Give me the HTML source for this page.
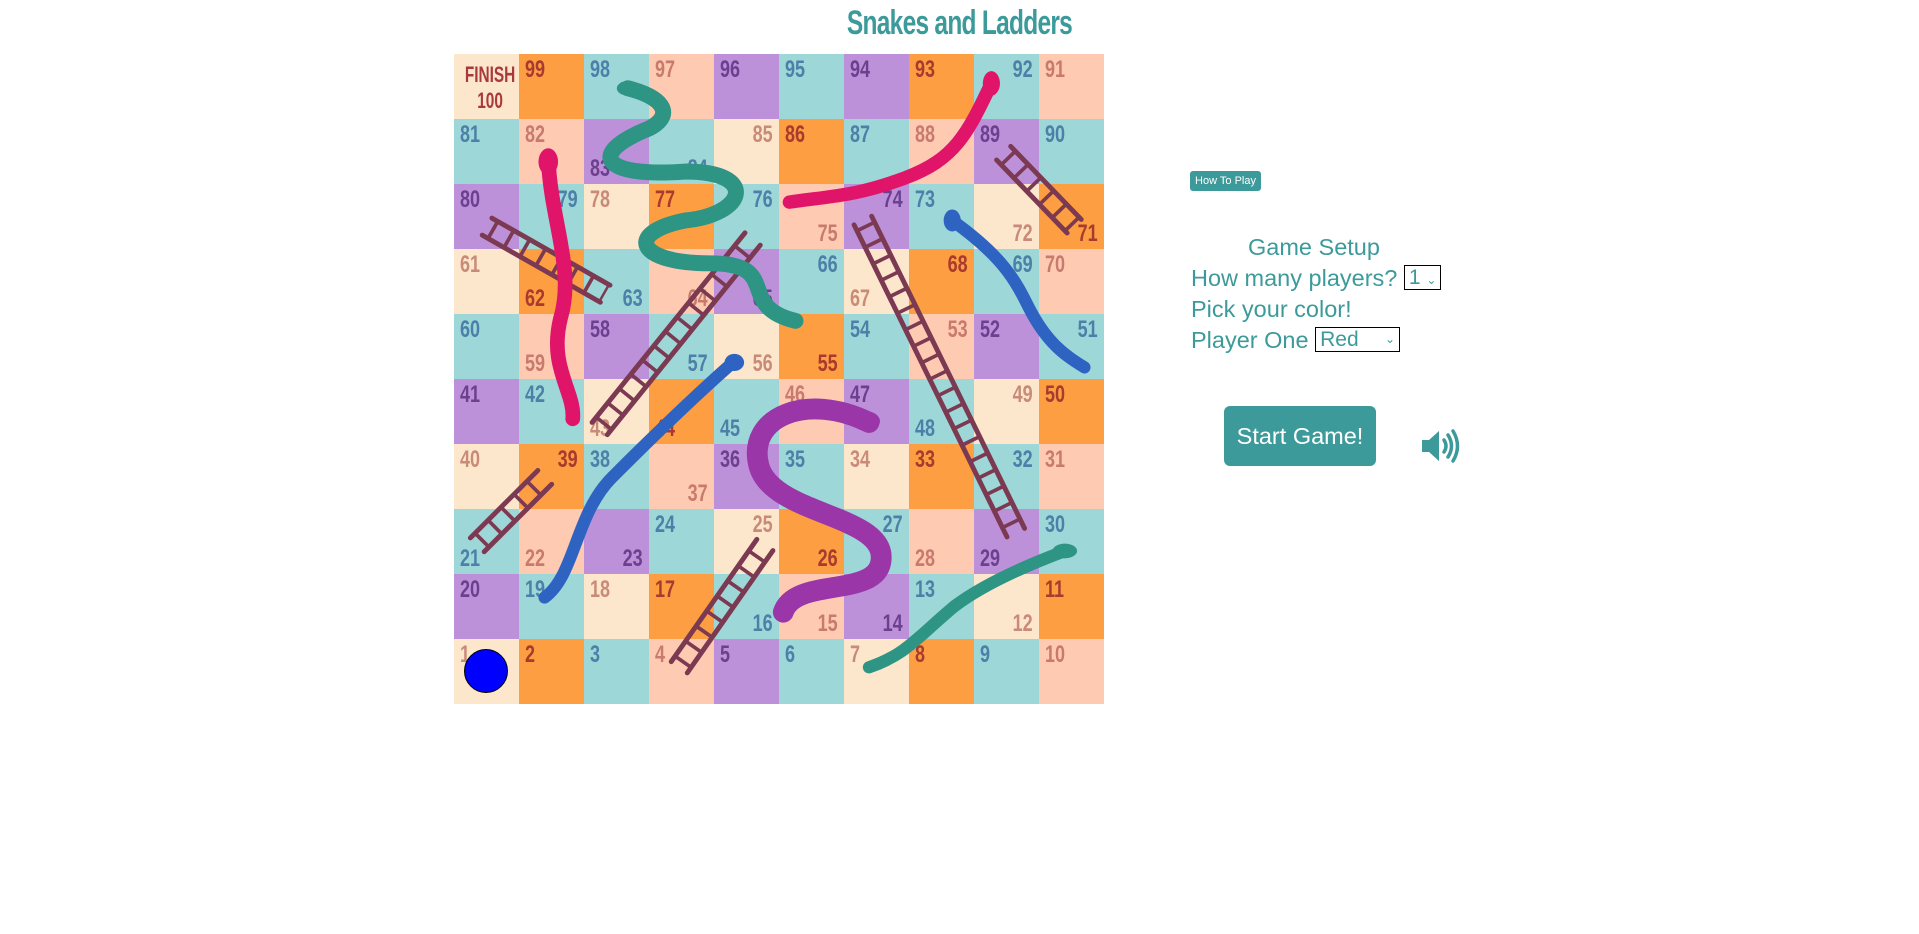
<!DOCTYPE html>
<html><head><meta charset="utf-8"><style>
body{margin:0;width:1919px;height:934px;background:#fff;position:relative;overflow:hidden;font-family:"Liberation Sans",sans-serif}
h1{position:absolute;left:0;width:1919px;top:4px;margin:0;text-align:center;font-family:"Liberation Sans",sans-serif;font-weight:bold;font-size:34px;color:#3d9a9a;letter-spacing:-1px;transform:scaleX(0.72)}
#board{position:absolute;left:454px;top:54px;width:650px;height:650px;display:grid;grid-template-columns:repeat(10,65px);grid-template-rows:repeat(10,65px)}
#board div{position:relative;font-family:"Liberation Sans",sans-serif;font-weight:bold;font-size:24px;padding:2px 0 0 6px;box-sizing:border-box}
#board div span{display:inline-block;transform:scaleX(0.75);transform-origin:left}
.c{background:#fde7cc}.o{background:#fd9e42}.t{background:#9dd7d7}.p{background:#fecbb2}.u{background:#bc91d9}
.c{color:#c98a78}.o{color:#a83a2e}.t{color:#4c80a8}.p{color:#c97a6e}.u{color:#6c3f8f}
svg#ov{position:absolute;left:454px;top:54px;width:650px;height:650px}
.tok{position:absolute;left:464px;top:649px;width:44px;height:44px;border-radius:50%;background:#0000ff;border:1px solid #000;box-sizing:border-box}
.htp{position:absolute;left:1190px;top:171px;width:71px;height:20px;background:#3d9a9a;color:#fff;border-radius:3px;font-size:11px;line-height:20px;text-align:center}
.txt{position:absolute;left:1191px;font-size:23.5px;color:#3d9a9a;font-family:"Liberation Sans",sans-serif}
.sel{display:inline-block;border:1.5px solid #000;height:25px;vertical-align:middle;font-size:21px;line-height:23px;padding:0 4px;box-sizing:border-box;position:relative;top:-2px}
.start{position:absolute;left:1224px;top:406px;width:152px;height:60px;background:#3d9a9a;border-radius:6px;color:#fff;font-size:23.5px;line-height:60px;text-align:center;font-family:"Liberation Sans",sans-serif}
</style></head><body>
<h1>Snakes and Ladders</h1>
<div id="board">
<div class="c" style="font-size:22px;line-height:26px;text-align:center;padding:8px 0 0;color:#a83a3a"><span style="transform:scaleX(0.7);transform-origin:center">FINISH<br>100</span></div><div class="o"><span>99</span></div><div class="t"><span>98</span></div><div class="p"><span>97</span></div><div class="u"><span>96</span></div><div class="t"><span>95</span></div><div class="u"><span>94</span></div><div class="o"><span>93</span></div><div class="t" style="text-align:right;padding-right:6px"><span style="transform-origin:right">92</span></div><div class="p"><span>91</span></div>
<div class="t"><span>81</span></div><div class="p"><span>82</span></div><div class="u" style="padding-top:36px"><span>83</span></div><div class="t" style="padding-top:36px;text-align:right;padding-right:6px"><span style="transform-origin:right">84</span></div><div class="c" style="text-align:right;padding-right:6px"><span style="transform-origin:right">85</span></div><div class="o"><span>86</span></div><div class="t"><span>87</span></div><div class="p"><span>88</span></div><div class="u"><span>89</span></div><div class="t"><span>90</span></div>
<div class="u"><span>80</span></div><div class="t" style="text-align:right;padding-right:6px"><span style="transform-origin:right">79</span></div><div class="c"><span>78</span></div><div class="o"><span>77</span></div><div class="t" style="text-align:right;padding-right:6px"><span style="transform-origin:right">76</span></div><div class="p" style="padding-top:36px;text-align:right;padding-right:6px"><span style="transform-origin:right">75</span></div><div class="u" style="text-align:right;padding-right:6px"><span style="transform-origin:right">74</span></div><div class="t"><span>73</span></div><div class="c" style="padding-top:36px;text-align:right;padding-right:6px"><span style="transform-origin:right">72</span></div><div class="o" style="padding-top:36px;text-align:right;padding-right:6px"><span style="transform-origin:right">71</span></div>
<div class="c"><span>61</span></div><div class="o" style="padding-top:36px"><span>62</span></div><div class="t" style="padding-top:36px;text-align:right;padding-right:6px"><span style="transform-origin:right">63</span></div><div class="p" style="padding-top:36px;text-align:right;padding-right:6px"><span style="transform-origin:right">64</span></div><div class="u" style="padding-top:36px;text-align:right;padding-right:6px"><span style="transform-origin:right">65</span></div><div class="t" style="text-align:right;padding-right:6px"><span style="transform-origin:right">66</span></div><div class="c" style="padding-top:36px"><span>67</span></div><div class="o" style="text-align:right;padding-right:6px"><span style="transform-origin:right">68</span></div><div class="t" style="text-align:right;padding-right:6px"><span style="transform-origin:right">69</span></div><div class="p"><span>70</span></div>
<div class="t"><span>60</span></div><div class="p" style="padding-top:36px"><span>59</span></div><div class="u"><span>58</span></div><div class="t" style="padding-top:36px;text-align:right;padding-right:6px"><span style="transform-origin:right">57</span></div><div class="c" style="padding-top:36px;text-align:right;padding-right:6px"><span style="transform-origin:right">56</span></div><div class="o" style="padding-top:36px;text-align:right;padding-right:6px"><span style="transform-origin:right">55</span></div><div class="t"><span>54</span></div><div class="p" style="text-align:right;padding-right:6px"><span style="transform-origin:right">53</span></div><div class="u"><span>52</span></div><div class="t" style="text-align:right;padding-right:6px"><span style="transform-origin:right">51</span></div>
<div class="u"><span>41</span></div><div class="t"><span>42</span></div><div class="c" style="padding-top:36px"><span>43</span></div><div class="o" style="padding-top:36px"><span>44</span></div><div class="t" style="padding-top:36px"><span>45</span></div><div class="p"><span>46</span></div><div class="u"><span>47</span></div><div class="t" style="padding-top:36px"><span>48</span></div><div class="c" style="text-align:right;padding-right:6px"><span style="transform-origin:right">49</span></div><div class="o"><span>50</span></div>
<div class="c"><span>40</span></div><div class="o" style="text-align:right;padding-right:6px"><span style="transform-origin:right">39</span></div><div class="t"><span>38</span></div><div class="p" style="padding-top:36px;text-align:right;padding-right:6px"><span style="transform-origin:right">37</span></div><div class="u"><span>36</span></div><div class="t"><span>35</span></div><div class="c"><span>34</span></div><div class="o"><span>33</span></div><div class="t" style="text-align:right;padding-right:6px"><span style="transform-origin:right">32</span></div><div class="p"><span>31</span></div>
<div class="t" style="padding-top:36px"><span>21</span></div><div class="p" style="padding-top:36px"><span>22</span></div><div class="u" style="padding-top:36px;text-align:right;padding-right:6px"><span style="transform-origin:right">23</span></div><div class="t"><span>24</span></div><div class="c" style="text-align:right;padding-right:6px"><span style="transform-origin:right">25</span></div><div class="o" style="padding-top:36px;text-align:right;padding-right:6px"><span style="transform-origin:right">26</span></div><div class="t" style="text-align:right;padding-right:6px"><span style="transform-origin:right">27</span></div><div class="p" style="padding-top:36px"><span>28</span></div><div class="u" style="padding-top:36px"><span>29</span></div><div class="t"><span>30</span></div>
<div class="u"><span>20</span></div><div class="t"><span>19</span></div><div class="c"><span>18</span></div><div class="o"><span>17</span></div><div class="t" style="padding-top:36px;text-align:right;padding-right:6px"><span style="transform-origin:right">16</span></div><div class="p" style="padding-top:36px;text-align:right;padding-right:6px"><span style="transform-origin:right">15</span></div><div class="u" style="padding-top:36px;text-align:right;padding-right:6px"><span style="transform-origin:right">14</span></div><div class="t"><span>13</span></div><div class="c" style="padding-top:36px;text-align:right;padding-right:6px"><span style="transform-origin:right">12</span></div><div class="o"><span>11</span></div>
<div class="c"><span>1</span></div><div class="o"><span>2</span></div><div class="t"><span>3</span></div><div class="p"><span>4</span></div><div class="u"><span>5</span></div><div class="t"><span>6</span></div><div class="c"><span>7</span></div><div class="o"><span>8</span></div><div class="t"><span>9</span></div><div class="p"><span>10</span></div>
</div>
<svg id="ov" viewBox="371 44 531 531" fill="none" stroke-linecap="round">
<g stroke="#7b3a52">
<g transform="translate(398,185) rotate(29.6)"><line x1="0" y1="-8" x2="111" y2="-8" stroke-width="4"/><line x1="0" y1="8" x2="111" y2="8" stroke-width="4"/><line x1="4" y1="0" x2="111" y2="0" stroke-width="16" stroke-dasharray="3 12" stroke-linecap="butt"/></g>
<g transform="translate(490,350) rotate(-51.1)"><line x1="0" y1="-8" x2="199" y2="-8" stroke-width="4"/><line x1="0" y1="8" x2="199" y2="8" stroke-width="4"/><line x1="4" y1="0" x2="199" y2="0" stroke-width="16" stroke-dasharray="3 12" stroke-linecap="butt"/></g>
<g transform="translate(705,180) rotate(63.9)"><line x1="0" y1="-8" x2="284" y2="-8" stroke-width="4"/><line x1="0" y1="8" x2="284" y2="8" stroke-width="4"/><line x1="4" y1="0" x2="284" y2="0" stroke-width="16" stroke-dasharray="3 12" stroke-linecap="butt"/></g>
<g transform="translate(820,125) rotate(46)"><line x1="0" y1="-8" x2="83" y2="-8" stroke-width="4"/><line x1="0" y1="8" x2="83" y2="8" stroke-width="4"/><line x1="4" y1="0" x2="83" y2="0" stroke-width="16" stroke-dasharray="3 12" stroke-linecap="butt"/></g>
<g transform="translate(390,445) rotate(-45)"><line x1="0" y1="-8" x2="78" y2="-8" stroke-width="4"/><line x1="0" y1="8" x2="78" y2="8" stroke-width="4"/><line x1="4" y1="0" x2="78" y2="0" stroke-width="16" stroke-dasharray="3 12" stroke-linecap="butt"/></g>
<g transform="translate(555,545) rotate(-55)"><line x1="0" y1="-8" x2="122" y2="-8" stroke-width="4"/><line x1="0" y1="8" x2="122" y2="8" stroke-width="4"/><line x1="4" y1="0" x2="122" y2="0" stroke-width="16" stroke-dasharray="3 12" stroke-linecap="butt"/></g>
</g>
<path d="M513,72 C545,80 550,95 530,105 C480,125 490,145 560,140 C620,140 610,175 560,180 C510,190 520,215 580,215 C640,215 600,250 650,262" stroke="#2e9484" stroke-width="13"/>
<path d="M810,68 C790,110 780,130 740,145 C700,160 680,160 645,165" stroke="#e0156a" stroke-width="11"/>
<path d="M448,130 C450,180 470,220 458,260 C448,300 470,320 468,342" stroke="#e0156a" stroke-width="12"/>
<path d="M778,180 C820,210 830,230 840,250 C855,280 870,290 886,300" stroke="#2f63c2" stroke-width="10"/>
<path d="M600,295 C560,330 520,370 500,390 C470,420 470,470 445,488" stroke="#2f63c2" stroke-width="10"/>
<path d="M710,345 C660,320 610,340 620,380 C630,420 720,420 720,455 C720,490 650,470 640,500" stroke="#9b36a8" stroke-width="17"/>
<path d="M870,450 C830,465 800,480 780,495 C750,520 740,535 710,545" stroke="#2e9484" stroke-width="10"/>
<g stroke="none"><ellipse cx="513" cy="72" rx="9" ry="6" fill="#2e9484"/><ellipse cx="810" cy="68" rx="7" ry="10" fill="#e0156a"/><ellipse cx="448" cy="132" rx="8" ry="11" fill="#e0156a"/><ellipse cx="778" cy="180" rx="7" ry="9" fill="#2f63c2"/><ellipse cx="600" cy="296" rx="8" ry="7" fill="#2f63c2"/><ellipse cx="708" cy="344" rx="11" ry="8" fill="#9b36a8"/><ellipse cx="870" cy="450" rx="10" ry="6" fill="#2e9484"/></g>
</svg>
<div class="tok"></div>
<div class="htp">How To Play</div>
<div class="txt" style="top:234px;left:1248px">Game Setup</div>
<div class="txt" style="top:265px">How many players? <span class="sel">1 <span style="font-size:12px">&#8964;</span></span></div>
<div class="txt" style="top:296px">Pick your color!</div>
<div class="txt" style="top:327px">Player One <span class="sel" style="width:85px">Red <span style="float:right;font-size:12px">&#8964;</span></span></div>
<div class="start">Start Game!</div>
<svg style="position:absolute;left:1420px;top:428px" width="42" height="36" viewBox="0 0 42 36"><path d="M2,12 H9 L19,3 V33 L9,24 H2 Z" fill="#3d9a9a"/><path d="M24,12 Q28,18 24,24 M28,7 Q35,18 28,29 M33,3 Q42,18 33,33" stroke="#3d9a9a" stroke-width="3.5" fill="none" stroke-linecap="round"/></svg>
</body></html>
